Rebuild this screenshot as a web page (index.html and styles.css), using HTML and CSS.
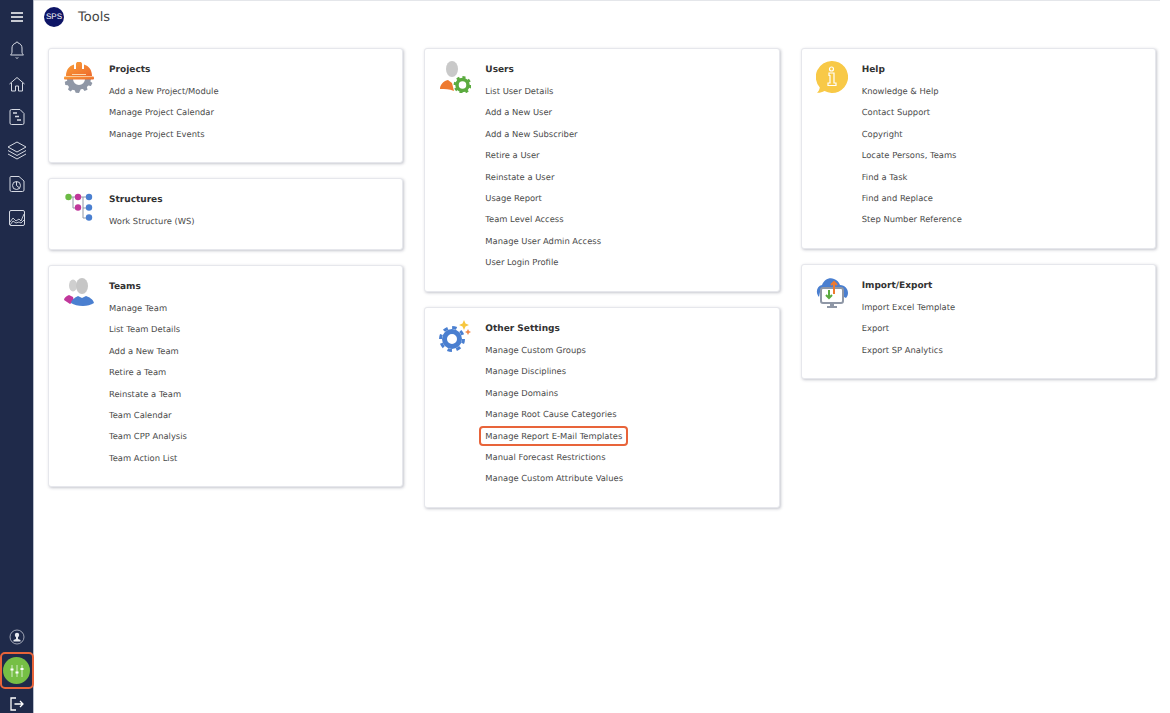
FILE: index.html
```html
<!DOCTYPE html>
<html lang="en">
<head>
  <meta charset="UTF-8">
  <meta name="viewport" content="width=device-width, initial-scale=1.0">
  <title>Tools</title>
  <link rel="stylesheet" href="styles.css">
</head>
<body>
  <div class="app">

    <!-- Sidebar -->
    <nav class="sidebar">
      <div class="nav-top">
        <svg class="nav-icon menu" viewBox="0 0 14 12"><path d="M1 2h12M1 6h12M1 10h12"/></svg>
        <svg class="nav-icon" viewBox="0 0 20 20"><path d="M10 2c-.8 0-1.2.5-1.2 1.1C6.3 3.7 5 5.6 5 8v4c0 1.3-.7 2.2-1.5 3h13c-.8-.8-1.5-1.700-1.500-3V8c0-2.400-1.300-4.300-3.800-4.900C11.200 2.500 10.800 2 10 2z"/><path d="M8.800 17.500a1.300 1.300 0 0 0 2.400 0"/></svg>
        <svg class="nav-icon" viewBox="0 0 20 20"><path d="M2.500 10 10 3.500l7.500 6.500M4.500 9v8h4v-5h3v5h4V9"/></svg>
        <svg class="nav-icon" viewBox="0 0 20 20"><path d="M3 4a1.500 1.500 0 0 1 1.500-1.500H13l4 4V16a1.500 1.500 0 0 1-1.500 1.500h-11A1.500 1.500 0 0 1 3 16z"/><path d="M6 6h4M8 9.500h4M10 13h4" stroke-width="1.600"/></svg>
        <svg class="nav-icon layers" viewBox="0 0 22 22"><path d="M11 2 2 7l9 5 9-5zM2 10.500l9 5 9-5M2 14l9 5 9-5"/></svg>
        <svg class="nav-icon" viewBox="0 0 20 20"><path d="M4 2.500h8l5 4.500v9a1.500 1.500 0 0 1-1.500 1.500h-11A1.500 1.500 0 0 1 3 16V3.500a1 1 0 0 1 1-1z"/><circle cx="9.500" cy="11.500" r="4"/><path d="M9.500 11.500V7.500M9.500 11.500l3 2.500"/></svg>
        <svg class="nav-icon" viewBox="0 0 20 20"><rect x="2.500" y="2.500" width="15" height="15" rx="1.500"/><path d="m3 14 3-4 3 3 3-2 2 2 3-7M3 17l3-4 3 2 3-1 2 1 3-3" stroke-width=".9"/></svg>
      </div>
      <div class="nav-bottom">
        <svg class="nav-icon user" viewBox="0 0 16 16"><circle cx="8" cy="8" r="7" stroke-width=".7"/><circle cx="8" cy="6" r="2.200" class="solid"/><path class="solid" d="M7 8h2v2l2.500 1v1.500h-7V11L7 10z"/></svg>
        <div class="settings-box">
          <div class="settings-btn">
            <svg viewBox="0 0 18 18"><path d="M4 3v12M9 3v12M14 3v12" stroke-width=".7"/><path d="M2.500 7.500h3M7.500 10.500h3M12.500 7h3" stroke-width="2.200"/></svg>
          </div>
        </div>
        <svg class="nav-icon logout" viewBox="0 0 16 16"><path d="M7 2H2v12h5M5.500 8H14M11 5l3 3-3 3"/></svg>
      </div>
    </nav>

    <div class="main">
      <!-- Header -->
      <header class="top-bar">
        <div class="logo">SPS</div>
        <h1 class="page-title">Tools</h1>
      </header>

      <!-- Card columns -->
      <div class="columns">
        <div class="column">
          <section class="card card-projects">
            <svg class="card-icon" viewBox="0 0 32 32">
              <defs><linearGradient id="hat" x1="0" y1="0" x2="1" y2="1"><stop offset="0" stop-color="#f9a13a"/><stop offset="1" stop-color="#ee6a2c"/></linearGradient></defs>
              <path fill="#8f97a6" d="M4 18h24l-.6 2.500 2 1.500-1.500 3-2.500-.5-1.500 1.600.6 2.600-3 1.200-1.500-2-2.200.4L16 32l-3.300-.2-1-2.500-2.200-.6-2 1.700-2.500-2 1-2.300-1.200-1.800-2.500-.3-.5-3.200 2.400-1zm6 0a6 6 0 0 0 12 0z"/>
              <path fill="url(#hat)" d="M3 15c0-6 3-10 8-11.500V8h2V2.500L14 1h4l1 1.500V8h2V3.500C26 5 29 9 29 15z"/>
              <rect fill="url(#hat)" x="1" y="15.500" width="30" height="3" rx="1"/>
              <rect fill="#fbd9b0" x="9" y="13" width="14" height="1"/>
            </svg>
            <div class="card-body">
              <h2 class="card-title">Projects</h2>
              <a class="card-link">Add a New Project/Module</a>
              <a class="card-link">Manage Project Calendar</a>
              <a class="card-link">Manage Project Events</a>
            </div>
          </section>

          <section class="card card-structures">
            <svg class="card-icon" viewBox="0 0 32 32">
              <path fill="none" stroke="#8f97a6" stroke-width="1" d="M5 6h24M10 6v11h5M20 6v21h8M20 17h8"/>
              <circle cx="5.500" cy="6" r="3.200" fill="#6cbb45"/>
              <circle cx="15" cy="6" r="3.200" fill="#c1379b"/>
              <circle cx="15" cy="16.500" r="3.200" fill="#c1379b"/>
              <circle cx="26" cy="6" r="3.200" fill="#4a7fd0"/>
              <circle cx="26" cy="16.500" r="3.200" fill="#4a7fd0"/>
              <circle cx="26" cy="26.500" r="3.200" fill="#4a7fd0"/>
            </svg>
            <div class="card-body">
              <h2 class="card-title">Structures</h2>
              <a class="card-link">Work Structure (WS)</a>
            </div>
          </section>

          <section class="card card-teams">
            <svg class="card-icon" viewBox="0 0 32 32">
              <ellipse cx="10" cy="7.500" rx="4" ry="6" fill="#cfcfcf"/>
              <ellipse cx="19" cy="8" rx="6" ry="8" fill="#c6c6c6"/>
              <path fill="#c1379b" d="M1 22c0-2 2-4 5-5l4 2 1 4-4 3z"/>
              <path fill="#4a7fd0" d="M8 25c1-4 5-6 7-7l4 2 4-2c3 1 7 3 8 7-3 2-7 3-11 3-5 0-9-1-12-3z"/>
            </svg>
            <div class="card-body">
              <h2 class="card-title">Teams</h2>
              <a class="card-link">Manage Team</a>
              <a class="card-link">List Team Details</a>
              <a class="card-link">Add a New Team</a>
              <a class="card-link">Retire a Team</a>
              <a class="card-link">Reinstate a Team</a>
              <a class="card-link">Team Calendar</a>
              <a class="card-link">Team CPP Analysis</a>
              <a class="card-link">Team Action List</a>
            </div>
          </section>
        </div>

        <div class="column">
          <section class="card card-users">
            <svg class="card-icon" viewBox="0 0 32 32">
              <ellipse cx="13" cy="8" rx="6" ry="8" fill="#c9c9c9"/>
              <path fill="#ee7a30" d="M1 28c0-4 3-8 8-9l4 3 2 8c-5-2-9-2-14-2z"/>
              <circle cx="23.500" cy="24" r="5.500" fill="none" stroke="#5bab3f" stroke-width="3.500"/>
              <circle cx="23.500" cy="24" r="7.700" fill="none" stroke="#5bab3f" stroke-width="2.400" stroke-dasharray="3 3"/>
            </svg>
            <div class="card-body">
              <h2 class="card-title">Users</h2>
              <a class="card-link">List User Details</a>
              <a class="card-link">Add a New User</a>
              <a class="card-link">Add a New Subscriber</a>
              <a class="card-link">Retire a User</a>
              <a class="card-link">Reinstate a User</a>
              <a class="card-link">Usage Report</a>
              <a class="card-link">Team Level Access</a>
              <a class="card-link">Manage User Admin Access</a>
              <a class="card-link">User Login Profile</a>
            </div>
          </section>

          <section class="card card-settings">
            <svg class="card-icon" viewBox="0 0 32 32">
              <circle cx="13" cy="19" r="7.500" fill="none" stroke="#4a7fd0" stroke-width="5"/>
              <circle cx="13" cy="19" r="11.500" fill="none" stroke="#4a7fd0" stroke-width="3" stroke-dasharray="4.500 4.500"/>
              <path fill="#f7c73e" d="m25 0 1.500 3.500L30 5l-3.500 1.500L25 10l-1.500-3.500L20 5l3.500-1.500z"/>
              <path fill="#f08a4b" d="m29 9 1 2 2 1-2 1-1 2-1-2-2-1 2-1z"/>
            </svg>
            <div class="card-body">
              <h2 class="card-title">Other Settings</h2>
              <a class="card-link">Manage Custom Groups</a>
              <a class="card-link">Manage Disciplines</a>
              <a class="card-link">Manage Domains</a>
              <a class="card-link">Manage Root Cause Categories</a>
              <a class="card-link"><span class="highlight">Manage Report E-Mail Templates</span></a>
              <a class="card-link">Manual Forecast Restrictions</a>
              <a class="card-link">Manage Custom Attribute Values</a>
            </div>
          </section>
        </div>

        <div class="column">
          <section class="card card-help">
            <svg class="card-icon" viewBox="0 0 32 32">
              <path fill="#f8c947" d="M16 0a16 16 0 1 1-7.500 30.100C6 31.500 3.500 32 1 31.800c1.500-1.300 2.500-3 2.800-5.200A16 16 0 0 1 16 0z"/>
              <path fill="none" stroke="#fff" stroke-width="1.200" d="M13 12h5v10h2v2.500h-8V22h2v-7.500h-1z"/>
              <circle cx="15.500" cy="8" r="2" fill="none" stroke="#fff" stroke-width="1.200"/>
            </svg>
            <div class="card-body">
              <h2 class="card-title">Help</h2>
              <a class="card-link">Knowledge &amp; Help</a>
              <a class="card-link">Contact Support</a>
              <a class="card-link">Copyright</a>
              <a class="card-link">Locate Persons, Teams</a>
              <a class="card-link">Find a Task</a>
              <a class="card-link">Find and Replace</a>
              <a class="card-link">Step Number Reference</a>
            </div>
          </section>

          <section class="card card-import">
            <svg class="card-icon" viewBox="0 0 32 32">
              <path fill="#4a7fd0" d="M3 20C-1 15 1 9 6 8c2-5 7-8 12-6 3 1 5 3 6 6 5 0 8 4 8 8 0 2-1 4-2 5l-2-1V15c0-2-1-3-3-3H6c-1.500 0-2 1-2 3z"/>
              <rect x="5" y="11" width="22" height="15" rx="2" fill="#fff" stroke="#8f97a6" stroke-width="2"/>
              <path fill="#8f97a6" d="M14 26h4v3h3v2h-10v-2h3z"/>
              <path fill="none" stroke="#5bab3f" stroke-width="2" d="M13 13v8M10 18l3 3 3-3"/>
              <path fill="none" stroke="#ee7a30" stroke-width="2" d="M18 17V5M15 8l3-3 3 3"/>
            </svg>
            <div class="card-body">
              <h2 class="card-title">Import/Export</h2>
              <a class="card-link">Import Excel Template</a>
              <a class="card-link">Export</a>
              <a class="card-link">Export SP Analytics</a>
            </div>
          </section>
        </div>
      </div>
    </div>
  </div>
</body>
</html>
```

FILE: styles.css
```css
/* General Reset */
* {
  margin: 0;
  padding: 0;
  box-sizing: border-box;
  font-family: 'DejaVu Sans', Verdana, sans-serif;
}

body {
  background: #ffffff;
  height: 713px;
  overflow: hidden;
  text-rendering: geometricPrecision;
}

.app {
  display: flex;
  width: 1160px;
  height: 713px;
}

/* Sidebar */
.sidebar {
  width: 34px;
  flex-shrink: 0;
  background: #1f2a4a;
  display: flex;
  flex-direction: column;
  justify-content: space-between;
  align-items: center;
  border-right: 1px solid #b9bfcc;
}

.nav-top {
  display: flex;
  flex-direction: column;
  align-items: center;
  padding-top: 9px;
  gap: 13.5px;
}

.nav-bottom {
  display: flex;
  flex-direction: column;
  align-items: center;
}

.nav-icon {
  width: 20px;
  height: 20px;
  fill: none;
  stroke: #d5d9e2;
  stroke-width: 1;
  display: block;
}

.nav-icon.menu {
  width: 14px;
  height: 16px;
  margin-bottom: 1.5px;
  stroke: #ffffff;
  stroke-width: 1.4;
}

.nav-icon.layers {
  width: 22px;
  height: 22px;
  margin: -1px 0;
}

.nav-icon.user {
  width: 16px;
  height: 16px;
  margin-bottom: 7px;
}

.nav-icon .solid {
  fill: #e6e8ee;
  stroke: none;
}

.nav-icon.logout {
  width: 16px;
  height: 16px;
  margin: 7px 0 1px;
  stroke: #ffffff;
  stroke-width: 1.3;
}

.settings-box {
  width: 34px;
  height: 37px;
  border: 2px solid #e8643a;
  border-radius: 5px;
  display: flex;
  justify-content: center;
  align-items: center;
}

.settings-btn {
  width: 27px;
  height: 27px;
  border-radius: 50%;
  background: #76bf45;
  display: flex;
  justify-content: center;
  align-items: center;
}

.settings-btn svg {
  width: 18px;
  height: 18px;
  fill: none;
  stroke: #ffffff;
  stroke-width: 1;
}

/* Main area */
.main {
  flex: 1;
  border-top: 1px solid #e4e6ea;
}

.top-bar {
  height: 47px;
  padding: 6px 0 0 10px;
  display: flex;
  align-items: flex-start;
  gap: 14px;
}

.logo {
  width: 20px;
  height: 20px;
  border-radius: 50%;
  background: #0e1566;
  color: #ffffff;
  font-family: 'Liberation Sans', Arial, sans-serif;
  font-size: 8px;
  line-height: 20px;
  text-align: center;
}

.page-title {
  font-size: 13px;
  font-weight: 400;
  color: #444444;
  line-height: 21px;
}

.columns {
  display: flex;
  gap: 21px;
  padding-left: 14px;
  padding-right: 4px;
}

.column {
  flex: 1;
  display: flex;
  flex-direction: column;
  gap: 15px;
}

/* Cards */
.card {
  display: flex;
  background: #ffffff;
  border-radius: 3px;
  border: 1px solid #e6e7ec;
  box-shadow: 1px 1px 3px rgba(60, 65, 90, 0.3);
  padding: 12px 0 0 14px;
}

.card-projects { height: 115px; }
.card-structures { height: 72px; }
.card-teams { height: 222px; }
.card-users { height: 244px; }
.card-settings { height: 201px; }
.card-help { height: 201px; }
.card-import { height: 115px; }

.card-icon {
  width: 32px;
  height: 32px;
  flex-shrink: 0;
  margin-right: 14px;
}

.card-body {
  padding-top: 1.5px;
}

.card-title {
  font-size: 9px;
  font-weight: 700;
  color: #333333;
  line-height: 15px;
  margin-bottom: 3.5px;
}

.card-link {
  display: block;
  font-size: 8.4px;
  color: #4a4a4a;
  line-height: 21.4px;
}

.highlight {
  display: inline-block;
  border: 2px solid #e8643a;
  border-radius: 4px;
  line-height: 16px;
  padding: 0 4px;
  margin-left: -6px;
}
```
